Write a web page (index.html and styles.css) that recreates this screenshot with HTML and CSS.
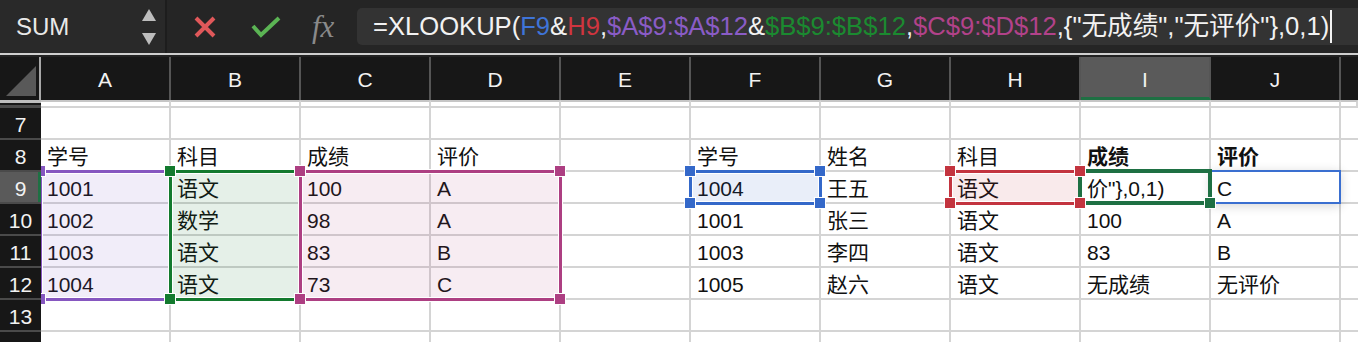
FILE: index.html
```html
<!DOCTYPE html>
<html lang="zh-CN">
<head>
  <meta charset="UTF-8">
  <meta name="viewport" content="width=device-width, initial-scale=1.0">
  <title>XLOOKUP 多条件查找</title>
  <link rel="stylesheet" href="styles.css">
</head>
<body>
  <div class="formula-bar">
    <div class="name-box">
      <span class="name">SUM</span>
      <div class="spinner">
        <svg width="14" height="12" viewBox="0 0 14 12"><path d="M7 0 L14 12 L0 12 Z" fill="#bdbdbd"/></svg>
        <svg width="14" height="12" viewBox="0 0 14 12"><path d="M0 0 L14 0 L7 12 Z" fill="#bdbdbd"/></svg>
      </div>
    </div>
    <div class="bar-buttons">
      <svg class="btn-cancel" width="24" height="22" viewBox="0 0 24 22"><path d="M3 2 L21 20 M21 2 L3 20" stroke="#e0585a" stroke-width="4" fill="none"/></svg>
      <svg class="btn-enter" width="30" height="22" viewBox="0 0 30 22"><path d="M2 10 L10 19 L28 2" stroke="#5bb454" stroke-width="4" fill="none"/></svg>
      <span class="fx">fx</span>
    </div>
    <div class="formula-input">
      <span class="formula-text">=XLOOKUP(<span class="ref-f">F9</span>&amp;<span class="ref-h">H9</span>,<span class="ref-a">$A$9:$A$12</span>&amp;<span class="ref-b">$B$9:$B$12</span>,<span class="ref-c">$C$9:$D$12</span>,{"无成绩","无评价"},0,1)</span><span class="caret"></span>
    </div>
  </div>

  <div class="sheet" id="sheet"></div>

  <script>
    document.addEventListener('DOMContentLoaded', function() {
      const sheet = document.getElementById('sheet');
      const cols = ['A', 'B', 'C', 'D', 'E', 'F', 'G', 'H', 'I', 'J'];
      const data = {
        8: ['学号', '科目', '成绩', '评价', '', '学号', '姓名', '科目', '成绩', '评价'],
        9: ['1001', '语文', '100', 'A', '', '1004', '王五', '语文', '价"},0,1)', 'C'],
        10: ['1002', '数学', '98', 'A', '', '1001', '张三', '语文', '100', 'A'],
        11: ['1003', '语文', '83', 'B', '', '1003', '李四', '语文', '83', 'B'],
        12: ['1004', '语文', '73', 'C', '', '1005', '赵六', '语文', '无成绩', '无评价']
      };
      const activeRow = 9;
      const activeCol = 8;

      function add(cls, text) {
        const el = document.createElement('div');
        el.className = cls;
        if (text) el.textContent = text;
        sheet.appendChild(el);
        return el;
      }

      // 列标题
      add('corner');
      cols.forEach(function(c, i) {
        add('col-head' + (i === activeCol ? ' is-active' : ''), c);
      });
      add('col-head col-last');

      // 冻结分隔条
      add('strip-head');
      for (let i = 0; i <= cols.length; i++) add('strip');

      // 行
      for (let r = 7; r <= 14; r++) {
        add('row-head' + (r === activeRow ? ' is-active' : ''), String(r));
        const values = data[r] || [];
        cols.forEach(function(c, i) {
          const bold = r === 8 && i >= 8;
          add('cell' + (bold ? ' bold' : ''), values[i] || '');
        });
        add('cell col-last');
      }

      // 引用区域
      const x = function(c) { return 41 + 130 * c - 1; };
      const y = function(r) { return 51 + 32 * (r - 7) - 1; };

      function place(el, left, top, w, h) {
        el.style.left = left + 'px';
        el.style.top = top + 'px';
        el.style.width = w + 'px';
        el.style.height = h + 'px';
      }

      function handle(color, cx, cy) {
        const el = add('handle handle-' + color);
        el.style.left = (cx - 6) + 'px';
        el.style.top = (cy - 6) + 'px';
      }

      const ranges = [
        { c1: 0, c2: 0, r1: 9, r2: 12, color: 'purple' },
        { c1: 1, c2: 1, r1: 9, r2: 12, color: 'green' },
        { c1: 2, c2: 3, r1: 9, r2: 12, color: 'magenta' },
        { c1: 5, c2: 5, r1: 9, r2: 9, color: 'blue' },
        { c1: 7, c2: 7, r1: 9, r2: 9, color: 'red' }
      ];

      ranges.forEach(function(g) {
        const box = add('range range-' + g.color);
        place(box, x(g.c1) - 1.5, y(g.r1) - 1.5, x(g.c2 + 1) - x(g.c1) + 3, y(g.r2 + 1) - y(g.r1) + 3);
      });

      const peek = add('peek');
      place(peek, x(9), y(9) - 1, x(10) - x(9) + 1, 34);

      const active = add('active-cell');
      place(active, x(activeCol) - 2, y(activeRow) - 2, 134, 36);

      ranges.forEach(function(g) {
        handle(g.color, x(g.c1), y(g.r1));
        handle(g.color, x(g.c2 + 1), y(g.r1));
        handle(g.color, x(g.c1), y(g.r2 + 1));
        handle(g.color, x(g.c2 + 1), y(g.r2 + 1));
      });
      handle('active', x(activeCol + 1), y(activeRow + 1));
    });
  </script>
</body>
</html>
```

FILE: styles.css
```css
body {
  margin: 0;
  width: 1358px;
  height: 342px;
  overflow: hidden;
  background-color: #fff;
  font-family: 'Liberation Sans', 'Noto Sans CJK SC', sans-serif;
}

/* 编辑栏 */
.formula-bar {
  display: flex;
  height: 53px;
  background-color: #252525;
  border-bottom: 2px solid #cfcfcf;
}
.name-box {
  display: flex;
  align-items: center;
  justify-content: space-between;
  box-sizing: border-box;
  width: 167px;
  padding: 0 9px 0 16px;
  background-color: #292929;
  border-right: 2px solid #1d1d1d;
}
.name {
  color: #e8e8e8;
  font-size: 24px;
}
.spinner {
  display: flex;
  flex-direction: column;
  gap: 12px;
}
.spinner svg {
  display: block;
}
.bar-buttons {
  display: flex;
  align-items: center;
  box-sizing: border-box;
  width: 190px;
  padding-left: 26px;
}
.btn-cancel {
  margin-top: 1px;
}
.btn-enter {
  margin-left: 34px;
  margin-top: 1px;
}
.fx {
  margin-left: 31px;
  color: #8a8a8a;
  font-family: 'Liberation Serif', serif;
  font-style: italic;
  font-size: 31px;
  line-height: 1;
}
.formula-input {
  flex: 1;
  display: flex;
  align-items: center;
  height: 37px;
  margin-top: 8px;
  padding-left: 16px;
  background-color: #333;
  border-radius: 5px 0 0 5px;
  color: #f2f2f2;
  font-size: 25.6px;
  line-height: 37px;
  white-space: nowrap;
}
.ref-f { color: #3f74d8; }
.ref-h { color: #d0353f; }
.ref-a { color: #8a5cc6; }
.ref-b { color: #1b8a30; }
.ref-c { color: #b2428a; }
.caret {
  width: 2px;
  height: 33px;
  margin-left: 1px;
  background-color: #f2f2f2;
}

/* 工作表 */
.sheet {
  position: relative;
  display: grid;
  grid-template-columns: 41px repeat(10, 130px) 17px;
  grid-template-rows: 43px 8px repeat(8, 32px);
  border-top: 2px solid #222;
  font-size: 21px;
}
.corner,
.col-head,
.row-head,
.strip-head {
  position: relative;
  z-index: 4;
  box-sizing: border-box;
  background-color: #171717;
  color: #f2f2f2;
}
.corner {
  border-right: 2px solid #a8a8a8;
}
.corner::after {
  content: '';
  position: absolute;
  left: 6px;
  top: 9px;
  width: 30px;
  height: 30px;
  background-color: #595959;
  clip-path: polygon(100% 0, 100% 100%, 0 100%);
}
.col-head {
  padding-top: 4px;
  line-height: 38px;
  text-align: center;
  border-right: 2px solid #555;
}
.col-head.is-active {
  background-color: #5a5a5a;
  border-bottom: 3px solid #1e7043;
}
.col-last {
  border-right: none;
}
.strip-head {
  border-top: 3px solid #bdbdbd;
  border-bottom: 3px solid #4a4a4a;
}
.strip {
  box-sizing: border-box;
  border-top: 2px solid #c6c6c6;
  border-bottom: 2px solid #d4d4d4;
  border-right: 2px solid #d4d4d4;
}
.row-head {
  padding-top: 4px;
  line-height: 26px;
  text-align: center;
  border-bottom: 2px solid #4a4a4a;
}
.row-head.is-active {
  background-color: #5a5a5a;
  box-shadow: inset -3px 0 0 #1e7043;
}
.cell {
  box-sizing: border-box;
  padding: 4px 0 0 6px;
  line-height: 26px;
  color: #111;
  white-space: nowrap;
  overflow: hidden;
  border-right: 2px solid #d4d4d4;
  border-bottom: 2px solid #d4d4d4;
}
.cell.col-last {
  border-right: none;
}
.bold {
  font-weight: bold;
}

/* 引用框 */
.range {
  position: absolute;
  z-index: 1;
  box-sizing: border-box;
  border: 3px solid;
  box-shadow: 0 0 0 1px #fff, inset 0 0 0 1px #fff;
}
.range-purple { border-color: #8657c0; background-color: rgba(128, 88, 200, 0.11); }
.range-green { border-color: #137a2e; background-color: rgba(20, 120, 50, 0.11); }
.range-magenta { border-color: #ad3f82; background-color: rgba(176, 64, 132, 0.1); }
.range-blue { border-color: #3468c9; background-color: rgba(52, 104, 201, 0.11); }
.range-red { border-color: #c3343f; background-color: rgba(195, 52, 63, 0.1); }
.peek {
  position: absolute;
  z-index: 2;
  box-sizing: border-box;
  border: 2px solid #3a6fd0;
  box-shadow: 0 2px 10px rgba(0, 0, 0, 0.16);
}
.active-cell {
  position: absolute;
  z-index: 2;
  box-sizing: border-box;
  border: 4px solid #1e7043;
}
.handle {
  position: absolute;
  z-index: 3;
  width: 10px;
  height: 10px;
  border: 1px solid #fff;
}
.handle-purple { background-color: #8657c0; }
.handle-green { background-color: #137a2e; }
.handle-magenta { background-color: #ad3f82; }
.handle-blue { background-color: #3468c9; }
.handle-red { background-color: #c3343f; }
.handle-active { background-color: #1e7043; }
```
